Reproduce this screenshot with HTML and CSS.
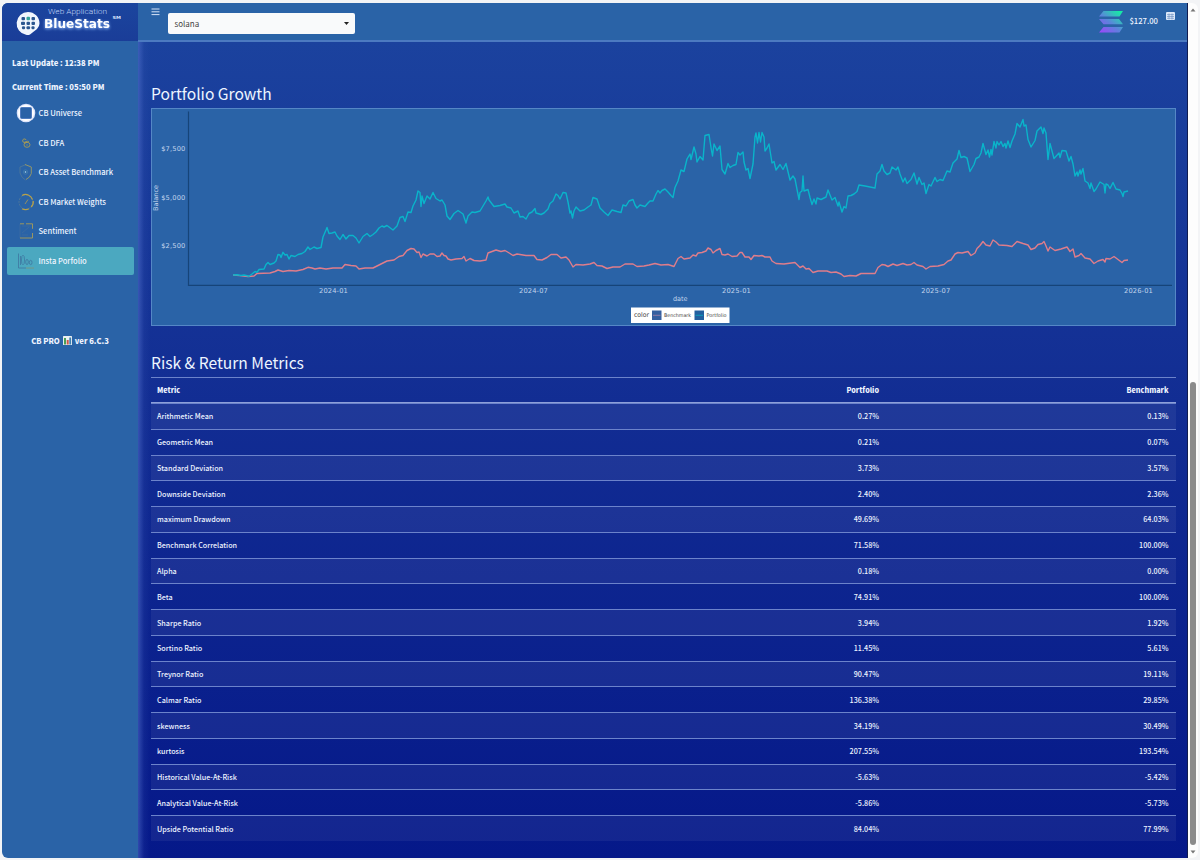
FILE: index.html
```html
<!DOCTYPE html>
<html lang="en">
<head>
<meta charset="utf-8">
<title>BlueStats</title>
<link rel="stylesheet" href="styles.css">
</head>
<body>
<div class="window">
  <aside class="sidebar">
    <div class="brand">
      <svg width="136" height="38" viewBox="2 3 136 38">
        <path d="M28 12a11.500 11.500 0 0 1 11.500 11.500q0 3-2.500 5.500l-7 5.500q-2 1-4 .3A11.500 11.500 0 0 1 28 12z" fill="#f1f6fd"/>
        <g fill="#2b568f"><rect x="21.500" y="17" width="3.500" height="3.200" rx="1"/><rect x="26.500" y="16.800" width="3.500" height="3.400" rx="1" fill="#35a69a"/><rect x="31.500" y="17" width="3.500" height="3.200" rx="1"/><rect x="21" y="21.700" width="4" height="3.300" rx="1"/><rect x="26.500" y="21.700" width="3.500" height="3.300" rx="1"/><rect x="31.500" y="21.700" width="3.500" height="3.300" rx="1"/><rect x="22" y="26.300" width="3" height="3" rx="1"/><rect x="26.500" y="26.300" width="3.500" height="3" rx="1"/><rect x="31.500" y="26.300" width="3" height="3" rx="1"/></g>
        <text x="48" y="14" class="brand-top" textLength="59" lengthAdjust="spacingAndGlyphs">Web Application</text>
        <text x="44" y="28" class="brand-name" textLength="66" lengthAdjust="spacingAndGlyphs">BlueStats</text>
        <text x="112.500" y="18.500" class="brand-mark" textLength="8.500" lengthAdjust="spacingAndGlyphs">SM</text>
      </svg>
    </div>
    <p class="stamp">Last Update : 12:38 PM</p>
    <p class="stamp">Current Time : 05:50 PM</p>
    <nav class="nav">
      <a class="item"><svg class="ico" viewBox="0 0 20 20"><circle cx="10" cy="10" r="9.300" fill="#dce4fb"/><circle cx="10" cy="10" r="8" fill="#fff"/><rect x="4.500" y="4.500" width="11" height="11" rx="1" fill="#2a62a6" stroke="#507cc0"/></svg><span>CB Universe</span></a>
      <a class="item"><svg class="ico" viewBox="0 0 20 20" fill="none" stroke="#a79b52" stroke-width=".9"><path d="M8.500 9.500a1.800 1.800 0 1 1 1.600-2.500M8 9.500l3.500-1.500M9 10l4-1.500"/><ellipse cx="11" cy="11.800" rx="3" ry="2.500"/><path d="M10 12h2" stroke="#6f8a7c"/></svg><span>CB DFA</span></a>
      <a class="item"><svg class="ico" viewBox="0 0 20 20" fill="none" stroke-width=".9"><path d="M10 2.500 4 5v6q1.500 5 5.500 7" stroke="#4f7898"/><path d="M9 2.500 15.300 5v6.500q-1 4-5.300 6" stroke="#9d9b63"/><circle cx="9.500" cy="10" r="2.200" stroke="#3d7aaa"/><circle cx="9.500" cy="10" r=".8" fill="#b8e2ef"/></svg><span>CB Asset Benchmark</span></a>
      <a class="item"><svg class="ico" viewBox="0 0 20 20" fill="none" stroke-width="1"><circle cx="10" cy="10" r="7" stroke="#50789a" stroke-dasharray="2 1"/><path d="M6 3.600a7 7 0 0 1 10.500 4M17.200 9a7 7 0 0 1-2 6M13 16.700a7 7 0 0 1-7 0" stroke="#b8a14a" stroke-width="1.200"/><path d="M9 12 12 7.500" stroke="#948f62"/></svg><span>CB Market Weights</span></a>
      <a class="item"><svg class="ico" viewBox="0 0 20 20" fill="none" stroke-width=".9"><path d="M4 3v14M6 5h8M6 12l7-6M6 14h6" stroke="#3b6ba3"/><path d="M4 2.800h4M10 2.800h6.500v5M16.500 12v5H4" stroke="#a79c58"/></svg><span>Sentiment</span></a>
      <a class="item active"><svg class="ico" viewBox="0 0 20 20" fill="none" stroke="#407ca4" stroke-width=".9"><path d="M2.500 2.500V17H18M4.500 5v9"/><ellipse cx="7" cy="9" rx="1.500" ry="4.800"/><ellipse cx="11" cy="11" rx="1.300" ry="2.600"/><ellipse cx="14.700" cy="11.500" rx="1.300" ry="2.200"/><path d="M10 17h8" stroke="#7fae8e"/></svg><span>Insta Porfolio</span></a>
    </nav>
    <p class="version"><span>CB PRO</span><svg width="9" height="9" viewBox="0 0 9 9"><rect width="9" height="9" rx=".6" fill="#e9eff2"/><rect x="1" y="2" width="2" height="6.500" fill="#4b9f55"/><rect x="3.700" y="4" width="2" height="4.500" fill="#cf574b"/><rect x="6.300" y="1.500" width="1.800" height="7" fill="#3d80b2"/></svg><span>ver 6.C.3</span></p>
  </aside>
  <main class="main">
    <header class="topbar">
      <svg class="burger" width="9" height="8" viewBox="0 0 9 8"><path d="M.5 1h8M.5 3.800h8M.5 6.600h8" stroke="#d5e3f7"/></svg>
      <div class="select"><span>solana</span><svg width="5" height="3" viewBox="0 0 5 3"><path d="M0 0h5L2.500 3z" fill="#222"/></svg></div>
      <div class="quote">
        <svg width="24" height="22" viewBox="0 0 24 22"><defs><linearGradient id="sol" x1="2" y1="22" x2="20" y2="0" gradientUnits="userSpaceOnUse"><stop offset="0" stop-color="#9b47fb"/><stop offset=".48" stop-color="#5c83dc"/><stop offset="1" stop-color="#16eba5"/></linearGradient></defs><path d="M4.500 0H24l-3.500 5.500H0zM0 8h20l4 5.300H4.500zM4.500 16H24l-3.500 5.500H0z" fill="url(#sol)"/></svg>
        <span>$127.00</span>
        <svg class="grid" width="9" height="8" viewBox="0 0 9 8"><rect width="9" height="8" rx="1" fill="#dce8f9"/><path d="M1 2.600h7M1 4.500h7M1 6.300h7M3 1.500v6M6 1.500v6" stroke="#648abd" stroke-width=".6"/></svg>
      </div>
    </header>
    <section class="content">
      <h2>Portfolio Growth</h2>
      <div class="chart">
        <svg width="1023" height="216" viewBox="152 109 1023 216">
          <path d="M188.500 111.500V285.300H1172" fill="none" stroke="#164479" stroke-width="1.200"/>
          <g class="tick" text-anchor="end"><text x="185.500" y="151">$7,500</text><text x="185.500" y="199.600">$5,000</text><text x="185.500" y="248">$2,500</text></g>
          <g class="tick" text-anchor="middle"><text x="333.500" y="293">2024-01</text><text x="533.500" y="293">2024-07</text><text x="736.500" y="293">2025-01</text><text x="935.800" y="293">2025-07</text><text x="1138.500" y="293">2026-01</text></g>
          <text class="axis" x="680.300" y="300.500" text-anchor="middle">date</text>
          <text class="axis" transform="translate(158.300 198) rotate(-90)" text-anchor="middle">Balance</text>
          <polyline class="bench" points="233,275 240,275.600 248,276.500 254,276 257,273.500 270,273 275,271.500 278,270 283,271.500 289,270.500 296,271 303,269.500 308,267.300 312,268 315,269 320,268 326,269 333,268 342,268 345,264.500 351,265.500 356,266 359,269 365,268 373,268 380,264.500 387,261 394,260 399,256.500 403,255.500 407,250.500 411,248.500 414,249 417,252.500 419,252 421,257.500 423,254 427,256 430,254 434,254 437,256.500 440,256 442,253 444,255.500 446,256 448,259 451,260 456,259 462,258.500 464,256.500 466,261 470,258.500 474,260.500 480,261 486,260 488,253 492,251.500 496,250 501,251.500 505,250.500 510,253.500 513,255.500 517,254 523,255 526,255.500 534,255.500 537,259.500 542,260 547,257.500 551,254.500 557,254.500 561,258 566,257 569,260 573,267 576,264.500 583,265 590,264 594,262.500 597,265.500 602,266 607,268.500 613,267 620,267 625,264 633,264 637,266.500 644,266 649,265 655,263.500 661,265 668,264.500 674,266.500 678,258.500 681,256.500 684,259 690,258 693,255 696,256 698,253 702,252.500 706,251 708,248 711,249.500 713,253 716,250.500 720,248.500 722,254.500 725,255 728,254 732,256.500 737,256 740,252.500 742,252.500 745,257 749,257 751,259.500 754,255.500 759,256 762,255.500 765,257 770,257 772,261 776,263.500 784,264 795,262.500 800,267.500 803,266 806,269 809,268.500 813,272.500 818,271 827,271 831,272.500 836,272 841,274 844,276.500 847,276 850,275.500 856,276 861,273.500 868,273.500 875,273.500 878,267.500 882,264.500 885,265 888,266.500 893,264 897,265.500 903,263.500 907,265 911,264.500 914,262.500 917,265 923,266.500 926,269 930,266.500 938,266 944,264.500 948,261 951,260 955,254 958,252.500 962,253 968,251.500 971,255.500 975,253 977,248.500 980,245.500 983,241.500 986,245 990,246 993,240 996,242 999,245 1007,245.500 1012,246.500 1017,241.500 1023,243.500 1028,245 1031,249.500 1035,248 1038,244.500 1042,243.500 1044,241.500 1046,246 1048,251 1050,247 1055,250.500 1061,249 1067,247 1070,251.500 1073,249 1075,257 1079,255.500 1081,253.500 1085,258 1090,259 1094,263.500 1098,261 1103,259.500 1105,262 1106,258.500 1110,259 1114,256.500 1118,259.500 1122,262.500 1124,260.500 1128,260"/>
          <polyline class="port" points="233,275 237,274.800 241,275.500 244,275 249,276.200 252,274 255,271.500 257,272.300 259,269.500 264,269 266,264.500 268,262.500 270,264.500 274,263 276,261 278,254.500 280,255 281,257.500 283,252.300 285,255 287,254.500 289,259 291,255.500 295,256.500 298,254.500 302,253.500 305,251.500 308,247 310,249.500 314,247 317,248.500 321,247.500 323,237 326,230 327,227.500 329,233.500 332,233 335,232 337,236 340,239.500 343,234.500 346,239 349,235.500 353,235.500 356,238 359,243 363,236.500 367,233.500 370,236.500 373,234.500 376,232 379,228 382,226 384,227 387,225.500 389,227 393,230 397,226 400,217.500 403,216.500 405,221.500 408,212 411,212.500 413,206 416,200 418,191 420,192.500 421,206.500 422,196 424,203.500 427,196 430,199 433,192.500 436,198.500 440,201 442,200 445,205 447,216 450,219.500 454,213.500 458,210.500 463,214 466,223 468,216 472,212 475,212.500 480,211 483,206 486,201 488,197 489,200 494,206.500 500,205.500 505,204 507,207 511,208 514,213 518,211 520,217 523,216.500 526,219 529,213.500 532,212 535,208.500 536,213 541,214.500 544,213 548,209 550,203.500 553,201 556,194 558,195.500 560,199 563,192.500 566,193 568,202 570,213 571,211 572.500,218 574,211 576,207 580,211 584,210 588,207 591,205 593,197.500 597,199 600,208 604,212 608,215.500 612,210 617,211.500 621,212.500 623,205 626,206 629,201 633,199.500 635,205 637,208 640,205 645,206.500 648,203 650,201 653,201 656,194 658,190.500 660,193 662,190.500 665,189 668,192 671,195.500 673,197.500 675,187.500 678,181 681,170 684,171.500 687,159 690,154 691,159.500 694,147 696,154 697,162 700,156.500 703,160 705,135.500 709,134.500 711,147.500 712.500,156 714,144 717,150.500 720,146 722,169.500 725,174 728,163.500 730,167.500 733,165.500 736,164.500 738,152.500 740,155 743,152 744,162 746,170 748,168.500 750,178.500 753,164 755,137 756,133 757.500,143 759,132.500 760.500,142 762,132.500 764,137 765,151 767,148 769,144 772,163 774,161.500 776,170 780,164.500 783,169.500 786,163.500 790,180 793,176 795,179 799,199.500 800,192.500 802,191 803,176 804,191 808,189.500 810,197.500 812,204.500 814,199 816,204 817,198 821,199.500 826,197 828,190 832,200 835,197.500 838,206 839,202 842,212 844,206.500 846,208 848,196 851,195.500 854,194 857,191.500 859,185 865,186 870,187 875,188 877,174 880,171 882,164.500 884,171 887,174.500 890,173 892,167 896,170 898,167 900,174 903,182 905,178 907,183.500 911,179.500 914,173 917,184 919,177.500 922,184.500 924,183 926,193.500 929,184.500 931,186 935,177.500 937,181.500 940,179.500 943,180.500 947,171 950,172 953,163 957,159 959,150.500 961,157.500 964,156.500 967,158 970,171.500 974,164.500 976,158.500 979,157 981,153 983,143.500 986,154.500 988,150 989.500,157 991,149.500 992,155 994,141.500 996,148 997,141.500 999,145 1001,141.500 1003,146.500 1005,143.500 1006,148 1008,141 1010,147.500 1012,141 1015,134 1017,123.500 1020,127 1023,119.500 1024,126 1026,125 1028,139.500 1031,147 1035,140.500 1037,131 1041,127 1043,133.500 1044,128 1046,133 1048,159.500 1050,143.500 1054,158.500 1059,153 1060,157.500 1062,150.500 1066,151 1069,161 1071,156.500 1073,164 1075,176 1077,172 1078,176 1080,170 1081,174 1083,168.500 1085,181 1088,183 1090,188.500 1091,183 1094,191.500 1096,189 1100,182 1104,184.500 1105,193 1106,184 1108,185 1110,188.500 1113,182.500 1116,189 1120,190 1122,193.500 1123,196.500 1124,192 1128,191"/>
          <rect x="631" y="307.500" width="98.500" height="15.500" fill="#fff"/>
          <text class="legend-title" x="634" y="317.300" textLength="15" lengthAdjust="spacingAndGlyphs">color</text>
          <rect x="652" y="310.500" width="9.500" height="9.500" fill="#355f9f"/><path d="M653 315.300h7.500" stroke="#907ba5"/>
          <text class="legend" x="664" y="317" textLength="27" lengthAdjust="spacingAndGlyphs">Benchmark</text>
          <rect x="694.500" y="310.500" width="9.500" height="9.500" fill="#225f9f"/><path d="M695.500 315.300h7.500" stroke="#0d9bb8"/>
          <text class="legend" x="706.500" y="317" textLength="20" lengthAdjust="spacingAndGlyphs">Portfolio</text>
        </svg>
      </div>
      <h2 class="second">Risk &amp; Return Metrics</h2>
      <table class="metrics">
        <thead><tr><th>Metric</th><th>Portfolio</th><th>Benchmark</th></tr></thead>
        <tbody>
          <tr><td>Arithmetic Mean</td><td>0.27%</td><td>0.13%</td></tr>
          <tr><td>Geometric Mean</td><td>0.21%</td><td>0.07%</td></tr>
          <tr><td>Standard Deviation</td><td>3.73%</td><td>3.57%</td></tr>
          <tr><td>Downside Deviation</td><td>2.40%</td><td>2.36%</td></tr>
          <tr><td>maximum Drawdown</td><td>49.69%</td><td>64.03%</td></tr>
          <tr><td>Benchmark Correlation</td><td>71.58%</td><td>100.00%</td></tr>
          <tr><td>Alpha</td><td>0.18%</td><td>0.00%</td></tr>
          <tr><td>Beta</td><td>74.91%</td><td>100.00%</td></tr>
          <tr><td>Sharpe Ratio</td><td>3.94%</td><td>1.92%</td></tr>
          <tr><td>Sortino Ratio</td><td>11.45%</td><td>5.61%</td></tr>
          <tr><td>Treynor Ratio</td><td>90.47%</td><td>19.11%</td></tr>
          <tr><td>Calmar Ratio</td><td>136.38%</td><td>29.85%</td></tr>
          <tr><td>skewness</td><td>34.19%</td><td>30.49%</td></tr>
          <tr><td>kurtosis</td><td>207.55%</td><td>193.54%</td></tr>
          <tr><td>Historical Value-At-Risk</td><td>-5.63%</td><td>-5.42%</td></tr>
          <tr><td>Analytical Value-At-Risk</td><td>-5.86%</td><td>-5.73%</td></tr>
          <tr><td>Upside Potential Ratio</td><td>84.04%</td><td>77.99%</td></tr>
        </tbody>
      </table>
    </section>
  </main>
  <div class="scroll">
    <svg width="6" height="4" viewBox="0 0 6 4"><path d="M.5 3.500 3 .5l2.500 3z" fill="#777"/></svg>
    <div class="thumb"></div>
    <svg width="6" height="4" viewBox="0 0 6 4"><path d="M.5 .5h5L3 3.500z" fill="#777"/></svg>
  </div>
</div>
</body>
</html>
```
FILE: styles.css
```css
* { box-sizing: border-box; }
body {
  margin: 0;
  height: 860px;
  padding: 3px 2px 2px;
  overflow: hidden;
  background: #f3f4f6;
  font-family: "Noto Sans CJK SC", "Open Sans", sans-serif;
  font-size: 7.6px;
  color: #eef4ff;
}
.window {
  display: flex;
  width: 1196px;
  height: 855px;
  border-radius: 6px;
  overflow: hidden;
  background: #fdfdfd;
}
.sidebar { width: 136px; flex: none; background: #2a63a7; }
.brand { height: 38px; margin-bottom: 13px; background: linear-gradient(#1b459e, #1a3d98); }
.brand svg { display: block; }
.brand-top { font: 300 7px Roboto, sans-serif; fill: #c1d5f5; }
.brand-name { font: bold 12px "DejaVu Sans", sans-serif; fill: #fff; filter: drop-shadow(0 1px 1.500px #8ebcff); }
.brand-mark { font: bold 4px "DejaVu Sans", sans-serif; fill: #dbe8ff; }
.stamp { margin: 0 0 6px 10px; height: 18px; line-height: 18px; font-size: 7.650px; font-weight: 900; white-space: nowrap; }
.nav { padding: 0 4px 0 5px; margin-top: -3px; }
.item {
  display: flex;
  align-items: center;
  gap: 3px;
  height: 28px;
  margin-bottom: 1.500px;
  padding-left: 8px;
  border-radius: 2px;
  font-weight: 500;
}
.item.active { background: #4ba8c0; }
.ico { width: 20px; height: 20px; margin-left: .5px; }
.item span { position: relative; top: -.5px; }
.version { display: flex; justify-content: center; align-items: center; gap: 3px; margin: 59px 0 0; height: 14px; font-weight: 900; }
.main {
  width: 1050px;
  flex: none;
  border-right: 1px solid #101c50;
  background: linear-gradient(to right, rgba(90, 120, 210, .5), rgba(60, 90, 180, .14) 6px, transparent 12px), linear-gradient(#1b429e 38px, #122d93 400px, #051889 855px);
}
.topbar {
  display: flex;
  align-items: flex-start;
  height: 39px;
  padding: 0 12px 0 13px;
  background: #2a63a7;
  border-bottom: 2px solid #4c7ac1;
}
.burger { margin-top: 5px; }
.select {
  display: flex;
  align-items: center;
  justify-content: space-between;
  width: 187.500px;
  height: 21px;
  margin: 10px 0 0 7.500px;
  padding: 0 6px 0 7px;
  border-radius: 2px;
  background: #f9fafb;
  color: #444;
  font-size: 8px;
}
.quote { display: flex; align-items: flex-start; margin-left: auto; line-height: 12px; font-size: 7.700px; font-weight: 500; }
.quote svg { margin: 8px 6px 0 0; }
.quote span { margin-top: 12px; }
.quote .grid { margin: 9px 0 0 8px; }
.content { padding: 39px 11px 0 13px; }
h2 { margin: 0; height: 27px; line-height: 24px; font-size: 15.600px; font-weight: 400; color: #edf5ff; white-space: nowrap; }
.chart { height: 218px; border: 1px solid #5587c6; background: #2a63a7; }
.chart svg { display: block; }
.tick { font: 6.700px "DejaVu Sans", sans-serif; fill: #c3d5ed; letter-spacing: .15px; }
.axis { font: 6.500px "DejaVu Sans", sans-serif; fill: #c3d5ed; }
.legend-title { font: 6.500px "DejaVu Sans", sans-serif; fill: #444; }
.legend { font: 5px "DejaVu Sans", sans-serif; fill: #444; }
.bench, .port { fill: none; stroke-width: 1.400; stroke-linejoin: round; }
.bench { stroke: #df7d8b; }
.port { stroke: #0ab4ca; }
.second { margin-top: 24px; }
.metrics { width: 1024.500px; table-layout: fixed; border-collapse: separate; border-spacing: 0; line-height: 12px; font-size: 7.200px; }
.metrics th, .metrics td { padding: 0 7px 0 6px; border-top: 1px solid #6c83cb; height: 25.780px; text-align: right; font-weight: 500; }
.metrics th { height: 26px; font-weight: 900; border-bottom: 1px solid #8da0d9; }
.metrics th:first-child, .metrics td:first-child { width: 430px; text-align: left; }
.metrics th:nth-child(2) { width: 305px; }
.metrics tbody tr:nth-child(odd) { background: rgba(255, 255, 255, .06); }
.scroll { display: flex; flex-direction: column; align-items: center; width: 10px; padding: 5px 0 4px; }
.thumb { width: 6px; height: 463px; margin: auto 0 5px; border-radius: 3px; background: #8b8b8b; }
```
